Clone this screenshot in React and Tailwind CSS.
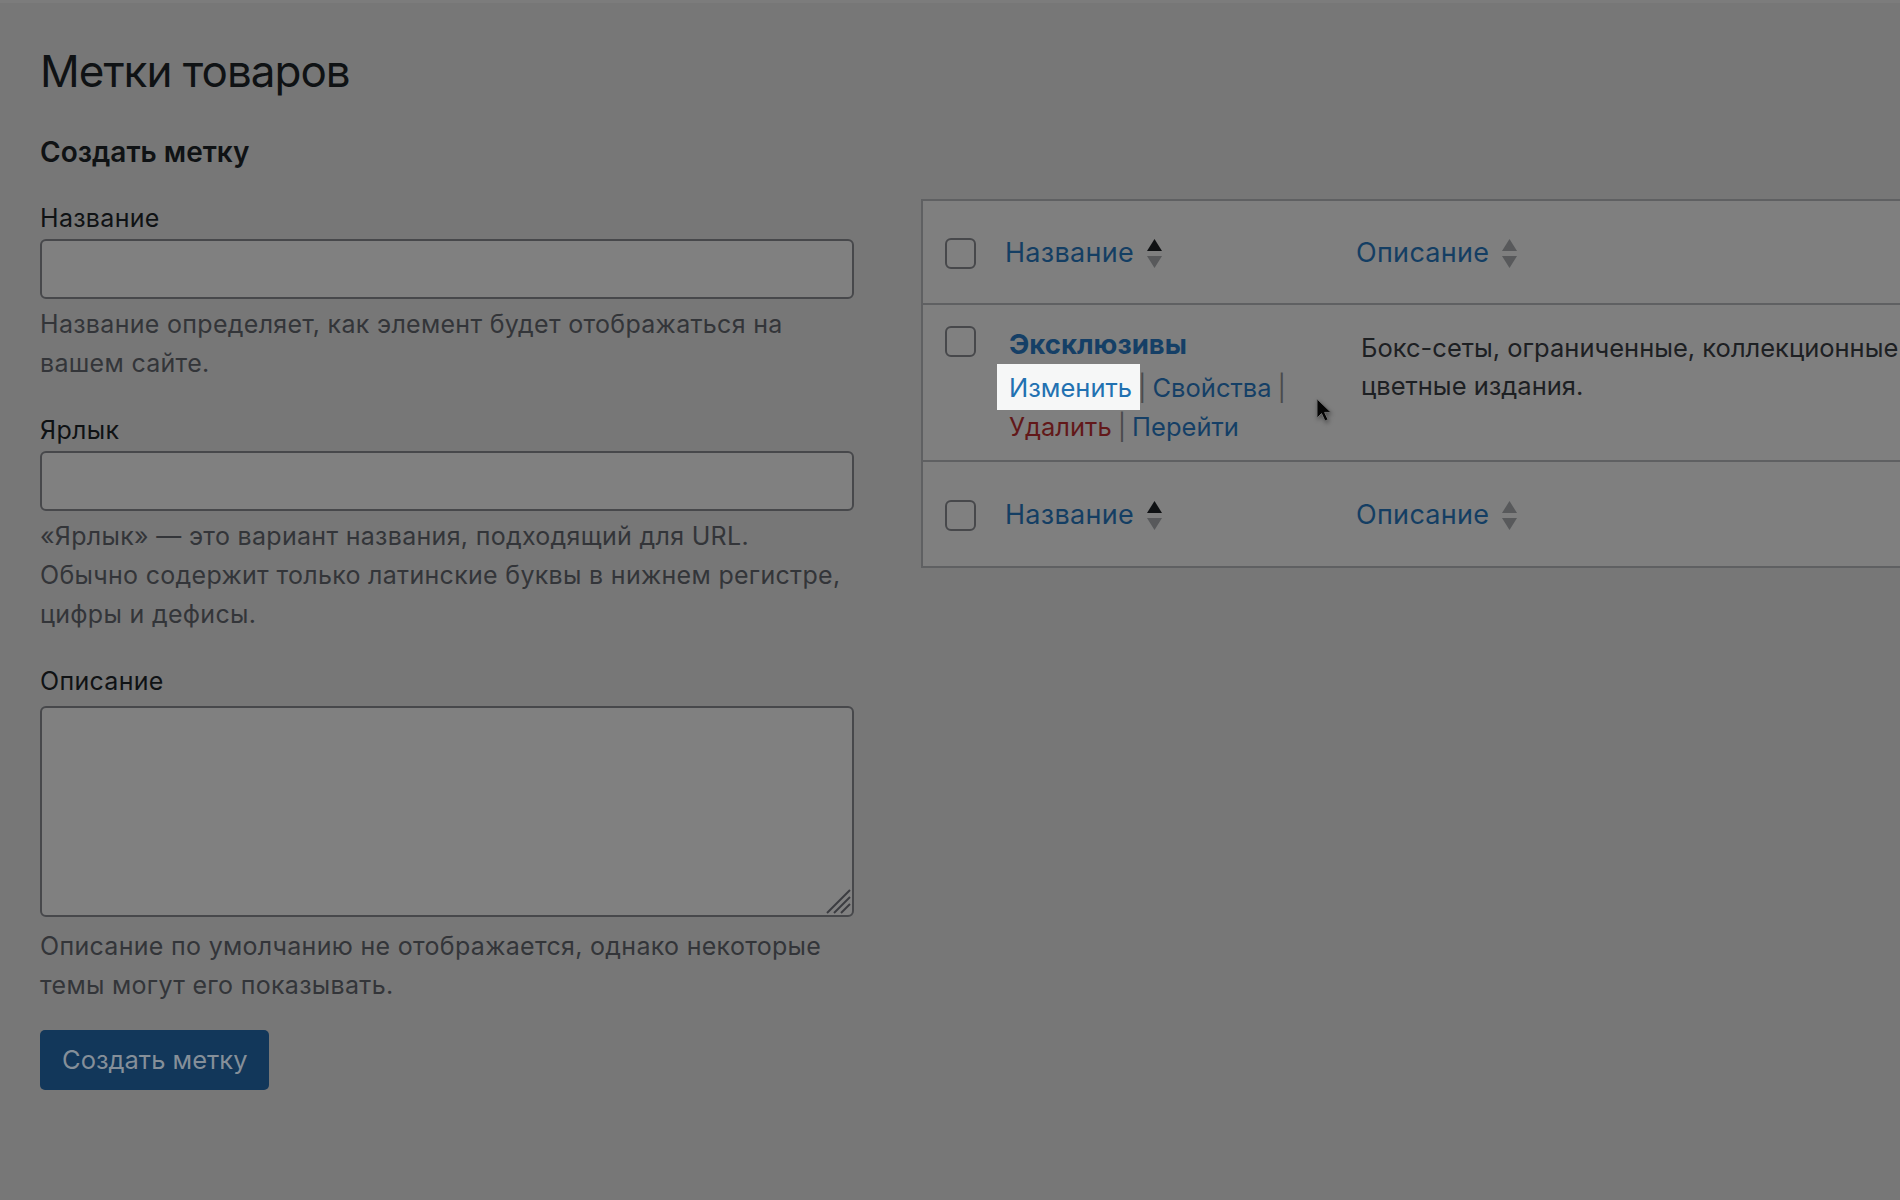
import React from 'react';

const FONT = { fontFamily: 'Inter, "Noto Sans", sans-serif' };

function SortArrows({ active }) {
  return (
    <svg width="15" height="30" viewBox="0 0 15 30" className="shrink-0">
      <polygon points="7.5,0 15,12 0,12" fill={active ? '#0f1113' : '#58595b'} />
      <polygon points="0,17 15,17 7.5,29" fill="#58595b" />
    </svg>
  );
}

function Checkbox() {
  return <div className="w-[31px] h-[31px] rounded-[6px] border-2 border-[#47484b] bg-[#808080] shrink-0" />;
}

function HeaderRow({ last }) {
  return (
    <div className={`grid grid-cols-[82px_351px_1fr] h-[104px] pt-[3px] items-center ${last ? '' : 'border-b-2 border-[#5f6062]'}`}>
      <div className="pl-[22px]">
        <Checkbox />
      </div>
      <div className="flex items-center gap-[13px] text-[27px] tracking-[0.3px] text-[#143e63]">
        <span>Название</span>
        <SortArrows active />
      </div>
      <div className="flex items-center gap-[13px] text-[27px] tracking-[0.3px] text-[#143e63]">
        <span>Описание</span>
        <SortArrows />
      </div>
    </div>
  );
}

function Field({ label, help, textarea, wide }) {
  return (
    <div className="flex flex-col">
      <label className="text-[25px] tracking-[0.3px] leading-[39px] text-[#0f1214]">{label}</label>
      {textarea ? (
        <div className="relative mt-[5px] w-[814px]">
          <div className="h-[211px] rounded-[6px] border-2 border-[#47484b] bg-[#808080]" />
          <svg width="26" height="26" viewBox="0 0 26 26" className="absolute right-[3px] bottom-[3px]">
            <line x1="2" y1="25" x2="25" y2="2" stroke="#3b3c40" strokeWidth="2" />
            <line x1="9" y1="25" x2="25" y2="9" stroke="#3b3c40" strokeWidth="2" />
            <line x1="16" y1="25" x2="25" y2="16" stroke="#3b3c40" strokeWidth="2" />
          </svg>
        </div>
      ) : (
        <div className="mt-[1px] w-[814px] h-[60px] rounded-[6px] border-2 border-[#47484b] bg-[#808080]" />
      )}
      <p
        className={`${textarea ? 'mt-[10px]' : 'mt-[6px]'} ${wide ? 'w-[830px]' : 'w-[800px]'} text-[25px] tracking-[0.3px] leading-[39px] text-[#333539]`}
      >
        {help}
      </p>
    </div>
  );
}

export default function App() {
  return (
    <div className="relative w-[1900px] h-[1200px] overflow-hidden bg-[#777777] border-t-[3px] border-[#7c7c7c]" style={FONT}>
      <div className="flex">
        {/* Left: add tag form */}
        <div className="w-[881px] shrink-0 pl-[40px]">
          <h1 className="mt-[38px] text-[44px] tracking-[-1px] leading-[60px] text-[#0f1214]">Метки товаров</h1>
          <h2 className="mt-[33px] text-[28px] leading-[36px] font-semibold text-[#0f1214]">Создать метку</h2>

          <div className="mt-[29px] flex flex-col gap-[28px]">
            <Field label="Название" help="Название определяет, как элемент будет отображаться на вашем сайте." />
            <Field
              wide
              label="Ярлык"
              help={
                <>
                  «Ярлык» — это вариант названия, подходящий для URL.
                  <br />
                  Обычно содержит только латинские буквы в нижнем регистре, цифры и дефисы.
                </>
              }
            />
            <Field
              textarea
              label="Описание"
              help="Описание по умолчанию не отображается, однако некоторые темы могут его показывать."
            />
          </div>

          <button className="mt-[25px] h-[60px] px-[22px] rounded-[5px] bg-[#12375a] text-[25.5px] text-[#858f99]">
            Создать метку
          </button>
        </div>

        {/* Right: tag list */}
        <div className="ml-[40px] mt-[196px] flex-1">
          <div className="border-2 border-r-0 border-[#5f6062] bg-[#7f7f7f] w-[1200px]">
            <HeaderRow />

            <div className="grid grid-cols-[82px_351px_1fr] pt-[20px] pb-[14px] border-b-2 border-[#5f6062]">
              <div className="pl-[22px] pt-[1px]">
                <Checkbox />
              </div>
              <div className="pl-[4px]">
                <div className="text-[27.5px] font-bold leading-[39px] text-[#153f66]">Эксклюзивы</div>
                <div className="mt-[4px] text-[25.5px] leading-[39px]">
                  <span className="relative">
                    <span className="absolute -left-[12px] -right-[8px] -top-[8px] -bottom-[7px] bg-[#f6f7f7]" />
                    <span className="relative text-[#2271b1]">Изменить</span>
                  </span>
                  <span className="mx-[6px] text-[#4a4b4d]">|</span>
                  <span className="text-[#153f66]">Свойства</span>
                  <span className="ml-[6px] text-[#4a4b4d]">|</span>
                  <br />
                  <span className="text-[#621819]">Удалить</span>
                  <span className="mx-[6px] text-[#4a4b4d]">|</span>
                  <span className="text-[#153f66]">Перейти</span>
                </div>
              </div>
              <div className="pl-[5px] pt-[4px] text-[25.5px] leading-[38px] text-[#1d2023]">
                Бокс-сеты, ограниченные, коллекционные и
                <br />
                цветные издания.
              </div>
            </div>

            <HeaderRow last />
          </div>
        </div>
      </div>

      {/* mouse pointer */}
      <svg
        width="20"
        height="26"
        viewBox="0 0 20 26"
        className="absolute left-[1316px] top-[395px]"
        style={{ filter: 'drop-shadow(1px 2px 2px rgba(0,0,0,0.35))' }}
      >
        <path d="M1 1 L1 20 L5.5 15.5 L9 23 L12 21.6 L8.6 14.4 L15 14.4 Z" fill="#050505" stroke="#6e6e6e" strokeWidth="1" strokeLinejoin="round" />
      </svg>
    </div>
  );
}
